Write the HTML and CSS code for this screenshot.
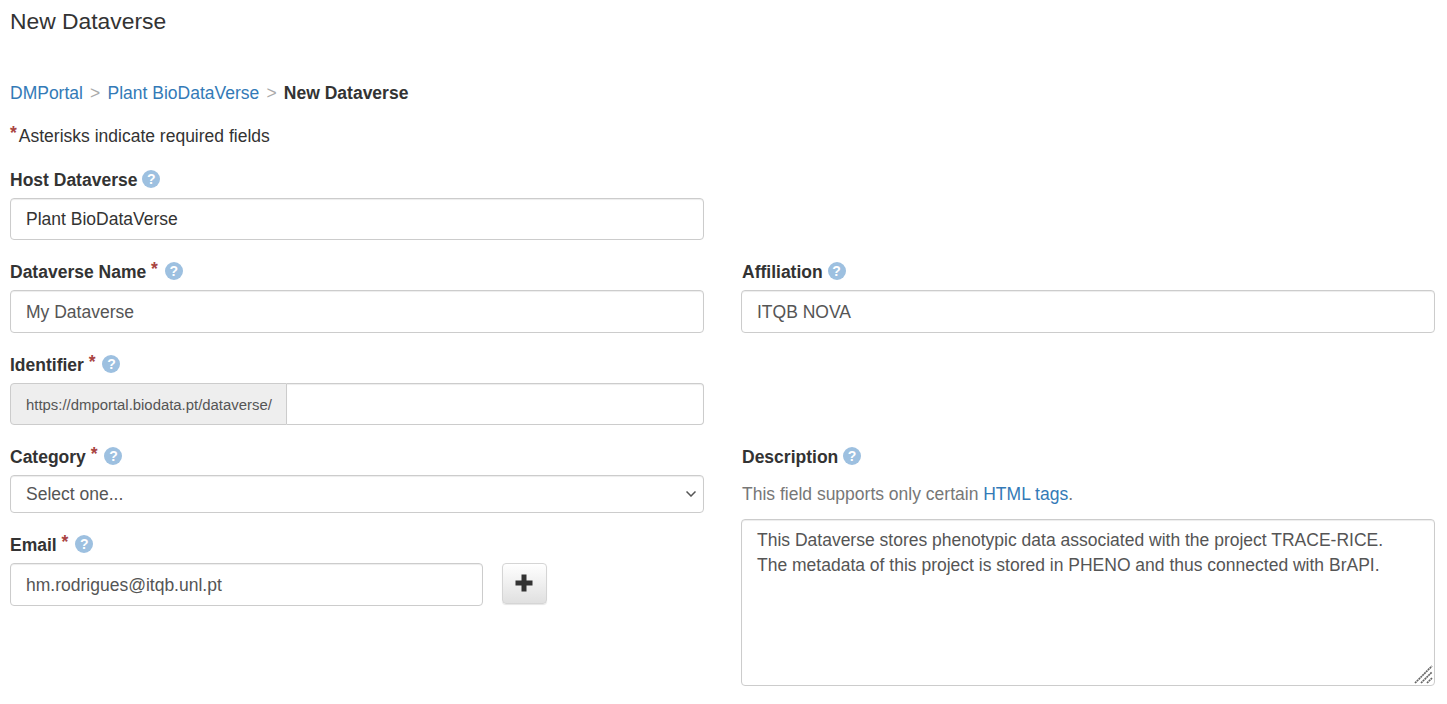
FILE: index.html
```html
<!DOCTYPE html>
<html>
  <head>
    <meta charset="UTF-8" />
    <title>New Dataverse</title>
    <link rel="stylesheet" href="styles.css">
  </head>
  <body>
    <h1 class="page-title">New Dataverse</h1>
    <nav class="breadcrumb">
      <a href="#">DMPortal</a>
      <span class="crumb-sep">&gt;</span>
      <a href="#">Plant BioDataVerse</a>
      <span class="crumb-sep">&gt;</span>
      <strong>New Dataverse</strong>
    </nav>
    <p class="required-note"><span class="req req-note">*</span>Asterisks indicate required fields</p>

    <form class="form-grid">
      <div class="field field-host">
        <label class="field-label">Host Dataverse <span class="help">?</span></label>
        <input class="input input-dark" type="text" value="Plant BioDataVerse" />
      </div>
      <div class="field field-name">
        <label class="field-label">Dataverse Name <span class="req">*</span> <span class="help">?</span></label>
        <input class="input" type="text" value="My Dataverse" />
      </div>
      <div class="field field-affiliation">
        <label class="field-label">Affiliation <span class="help">?</span></label>
        <input class="input" type="text" value="ITQB NOVA" />
      </div>
      <div class="field field-identifier">
        <label class="field-label">Identifier <span class="req">*</span> <span class="help">?</span></label>
        <div class="input-group">
          <span class="input-addon">https://dmportal.biodata.pt/dataverse/</span>
          <input class="input" type="text" />
        </div>
      </div>
      <div class="field-stack">
        <div class="field field-category">
          <label class="field-label">Category <span class="req">*</span> <span class="help">?</span></label>
          <select class="input select">
            <option>Select one...</option>
          </select>
        </div>
        <div class="field">
          <label class="field-label">Email <span class="req">*</span> <span class="help">?</span></label>
          <div class="email-row">
            <input class="input" type="text" value="hm.rodrigues@itqb.unl.pt" />
            <button class="add-btn" type="button" aria-label="Add">
              <svg width="18" height="18" viewBox="0 0 18 18"><path d="M6.500 .5h5V6.500h6v5h-6V17.500h-5V11.500H.5v-5h6z" fill="#333" /></svg>
            </button>
          </div>
        </div>
      </div>
      <div class="field field-description">
        <label class="field-label">Description <span class="help">?</span></label>
        <p class="hint">This field supports only certain <a href="#">HTML tags</a>.</p>
        <div class="textarea-wrap">
          <textarea class="input textarea">This Dataverse stores phenotypic data associated with the project TRACE-RICE.
The metadata of this project is stored in PHENO and thus connected with BrAPI.</textarea>
          <svg class="grip" width="20" height="20" viewBox="0 0 20 20">
            <path d="M1 18L18 1M7 18L18 7M13 18l5-5" stroke="#666" stroke-width="1.700" stroke-dasharray="2 .6" fill="none" />
          </svg>
        </div>
      </div>
    </form>
  </body>
</html>
```

FILE: styles.css
```css
* {
  box-sizing: border-box;
}
body {
  margin: 0;
  padding: 0 12px 0 10px;
  font-family: "Liberation Sans", Arial, sans-serif;
  font-size: 17.5px;
  line-height: 26px;
  color: #333;
  background: #fff;
  overflow: hidden;
}
a {
  color: #337ab7;
  text-decoration: none;
}
.page-title {
  margin: 0;
  padding-top: 6px;
  height: 67px;
  font-size: 22.85px;
  font-weight: 400;
  line-height: 30px;
}
.breadcrumb {
  height: 50px;
  padding-top: 13px;
}
.crumb-sep {
  color: #aaa;
  margin: 0 2.3px;
}
.required-note {
  margin: 0;
  height: 49px;
  padding-top: 6px;
}
.req {
  color: #a94442;
  font-weight: 700;
  line-height: 0;
  vertical-align: 3px;
}
.req-note {
  margin-right: 2px;
}
.form-grid {
  display: grid;
  grid-template-columns: 694px 694px;
  column-gap: 37px;
}
.field {
  margin-bottom: 18px;
}
.field-label {
  display: block;
  height: 32px;
  padding-top: 1px;
  font-weight: 700;
}
.field-affiliation .field-label,
.field-description .field-label,
.hint {
  padding-left: 1px;
}
.field-host,
.field-identifier {
  grid-column: 1 / 3;
  width: 694px;
}
.field-host .input {
  height: 42px;
  padding-top: 6px;
}
.help {
  display: inline-block;
  width: 18px;
  height: 18px;
  border-radius: 50%;
  background: #9dc0e0;
  color: #fff;
  font-size: 14px;
  font-weight: 700;
  line-height: 18px;
  text-align: center;
  vertical-align: 2px;
}
.req + .help {
  margin-left: 2px;
}
.input {
  display: block;
  width: 100%;
  height: 43px;
  padding: 7px 15px 5px;
  border: 1px solid #ccc;
  border-radius: 4px;
  background: #fff;
  color: #555;
  font-family: inherit;
  font-size: 17.5px;
  box-shadow: inset 0 1px 1px rgba(0, 0, 0, 0.075);
}
.input-dark {
  color: #333;
}
.input-group {
  display: flex;
}
.input-addon {
  flex: none;
  height: 42px;
  padding: 0 14px 0 15px;
  border: 1px solid #ccc;
  border-radius: 4px 0 0 4px;
  background: #eee;
  color: #555;
  font-size: 14.9px;
  line-height: 42px;
}
.input-group .input {
  height: 42px;
  border-left: 0;
  border-radius: 0 4px 4px 0;
}
.select {
  height: 38px;
  padding: 0 11px 0 15px;
  appearance: none;
  background-image: url("data:image/svg+xml,%3Csvg xmlns='http://www.w3.org/2000/svg' width='10' height='6'%3E%3Cpath d='M.5.5L5 5 9.500.5' stroke='%23555' stroke-width='1.500' fill='none'/%3E%3C/svg%3E");
  background-repeat: no-repeat;
  background-position: right 7px center;
}
.email-row {
  display: flex;
  gap: 19px;
}
.email-row .input {
  width: 473px;
}
.add-btn {
  display: flex;
  align-items: center;
  justify-content: center;
  width: 45px;
  height: 41px;
  padding: 0 1px 1px 0;
  border: 1px solid #d5d5d5;
  border-radius: 4px;
  background: linear-gradient(#fff, #e0e0e0);
  box-shadow: 0 1px 1px rgba(0, 0, 0, 0.1);
}
.hint {
  margin: 6px 0 12px;
  height: 26px;
  color: #777;
}
.textarea-wrap {
  position: relative;
}
.textarea {
  height: 167px;
  line-height: 25px;
  padding: 8px 15px;
  resize: none;
}
.grip {
  position: absolute;
  right: 1px;
  bottom: 1px;
  pointer-events: none;
}
```
